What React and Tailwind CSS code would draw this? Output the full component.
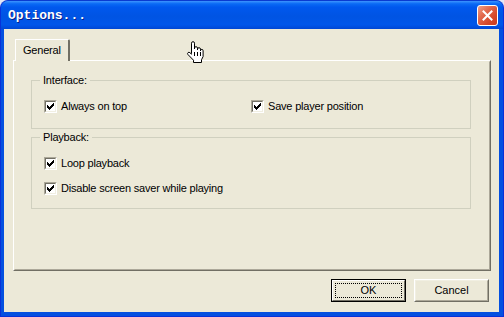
import React from "react";

const CHECK_PIXELS = [
  [6, 0],
  [5, 1], [6, 1],
  [0, 2], [4, 2], [5, 2], [6, 2],
  [0, 3], [1, 3], [3, 3], [4, 3], [5, 3],
  [0, 4], [1, 4], [2, 4], [3, 4], [4, 4],
  [1, 5], [2, 5], [3, 5],
  [2, 6],
];

function Checkbox() {
  return (
    <div className="w-[13px] h-[13px] shrink-0 border border-t-[#ACA899] border-l-[#ACA899] border-b-white border-r-white">
      <div className="w-full h-full bg-white border border-t-[#716F64] border-l-[#716F64] border-b-[#F1EFE2] border-r-[#F1EFE2] flex items-center justify-center">
        <svg width="7" height="7" viewBox="0 0 7 7" shapeRendering="crispEdges">
          {CHECK_PIXELS.map(([x, y]) => (
            <rect key={`${x}-${y}`} x={x} y={y} width="1" height="1" fill="#000" />
          ))}
        </svg>
      </div>
    </div>
  );
}

function CheckRow({ label, className = "" }) {
  return (
    <div className={`flex items-center gap-[4px] h-[13px] ${className}`}>
      <Checkbox />
      <span className="text-[11px] leading-[13px] tracking-[-0.2px] text-black">{label}</span>
    </div>
  );
}

function Group({ label, children, className = "" }) {
  return (
    <fieldset className={`border border-[#D0D0BF] ml-[16px] mr-[18px] ${className}`}>
      <legend className="ml-[8px] px-[3px] text-[11px] leading-[13px] tracking-[-0.2px] text-black">{label}</legend>
      {children}
    </fieldset>
  );
}

function Button({ label, isDefault }) {
  if (isDefault) {
    return (
      <div className="w-[75px] h-[23px] border border-black">
        <div className="w-full h-full border border-t-white border-l-white border-b-[#716F64] border-r-[#716F64] bg-[#ECE9D8] p-[2px]">
          <div className="w-full h-full border border-dotted border-black flex items-center justify-center text-[11px] leading-[13px] text-black">
            {label}
          </div>
        </div>
      </div>
    );
  }
  return (
    <div className="w-[75px] h-[23px] border border-t-white border-l-white border-b-[#716F64] border-r-[#716F64]">
      <div className="w-full h-full border border-t-[#F1EFE2] border-l-[#F1EFE2] border-b-[#ACA899] border-r-[#ACA899] flex items-center justify-center text-[11px] leading-[13px] text-black">
        {label}
      </div>
    </div>
  );
}

function HandCursor() {
  return (
    <svg className="absolute left-[185px] top-[41px]" width="19" height="23" viewBox="0 0 19 23">
      <path
        d="M6.5 12.5 V2.2 a1.5 1.5 0 0 1 3 0 V8 V7.2 a1.5 1.5 0 0 1 3 0 V9 V8.2 a1.5 1.5 0 0 1 3 0 V10 V9.7 a1.3 1.3 0 0 1 2.6 0 V15.5 l-1.6 3.3 V21.5 H8.5 V19.2 L3 13.6 a1.3 1.3 0 0 1 1.9 -1.9 L6.5 13.2 Z"
        fill="#fff"
        stroke="#000"
        strokeWidth="1"
        strokeLinejoin="round"
      />
      <path d="M9.5 11 v4 M12.5 11 v4 M15.5 11 v4" stroke="#000" strokeWidth="1" />
    </svg>
  );
}

export default function App() {
  return (
    <div className="w-[504px] h-[317px] bg-[#E3E8F6] overflow-hidden relative font-['Liberation_Sans',Arial,sans-serif]">
      <div className="w-[504px] h-[317px] flex flex-col rounded-t-[8px] bg-[#0450E0] border border-[#0831D9] border-t-[#0A3BD0]">
        {/* Title bar */}
        <div className="h-[28px] shrink-0 flex items-center justify-between pl-[7px] pr-[5px] rounded-t-[7px] bg-[linear-gradient(to_bottom,#3D95FF_0%,#0A6AF5_10%,#0058EE_22%,#0054E3_55%,#0056EA_85%,#0047D4_100%)]">
          <span className="text-white font-bold text-[13px] leading-[15px] font-['Liberation_Mono',monospace] [text-shadow:1px_1px_0_#0A1E8C]">
            Options...
          </span>
          <div className="w-[21px] h-[21px] rounded-[3px] border border-white bg-[linear-gradient(to_bottom_right,#F0A088_0%,#E26A4E_35%,#D5482A_70%,#C93A1E_100%)] flex items-center justify-center">
            <svg width="11" height="11" viewBox="0 0 11 11">
              <path d="M1.5 1.5 L9.5 9.5 M9.5 1.5 L1.5 9.5" stroke="#fff" strokeWidth="2" strokeLinecap="square" />
            </svg>
          </div>
        </div>
        {/* Client area */}
        <div className="flex-1 ml-[3px] mr-[4px] mb-[4px] bg-[#ECE9D8] flex flex-col pt-[10px] pl-[9px] pr-[8px]">
          {/* Tab strip */}
          <div className="flex pl-[2px] h-[21px] relative z-10">
            <div className="h-[22px] px-[7px] pt-[4px] border-l border-t border-white border-r-2 border-r-[#716F64] rounded-tr-[2px] bg-[#ECE9D8] text-[11px] leading-[13px] tracking-[-0.2px] text-black">
              General
            </div>
          </div>
          {/* Tab panel */}
          <div className="h-[211px] border border-t-white border-l-white border-b-[#716F64] border-r-[#716F64]">
            <div className="w-full h-full border border-t-transparent border-l-transparent border-b-[#ACA899] border-r-[#ACA899] pt-[12px]">
              <Group label="Interface:" className="h-[55px]">
                <div className="flex mt-[13px]">
                  <CheckRow label="Always on top" className="ml-[12px] w-[207px]" />
                  <CheckRow label="Save player position" />
                </div>
              </Group>
              <Group label="Playback:" className="mt-[2px] h-[78px]">
                <CheckRow label="Loop playback" className="ml-[12px] mt-[13px]" />
                <CheckRow label="Disable screen saver while playing" className="ml-[12px] mt-[12px]" />
              </Group>
            </div>
          </div>
          {/* Buttons */}
          <div className="flex justify-end gap-[8px] mt-[8px] pr-[2px]">
            <Button label="OK" isDefault />
            <Button label="Cancel" />
          </div>
        </div>
      </div>
      <HandCursor />
    </div>
  );
}
